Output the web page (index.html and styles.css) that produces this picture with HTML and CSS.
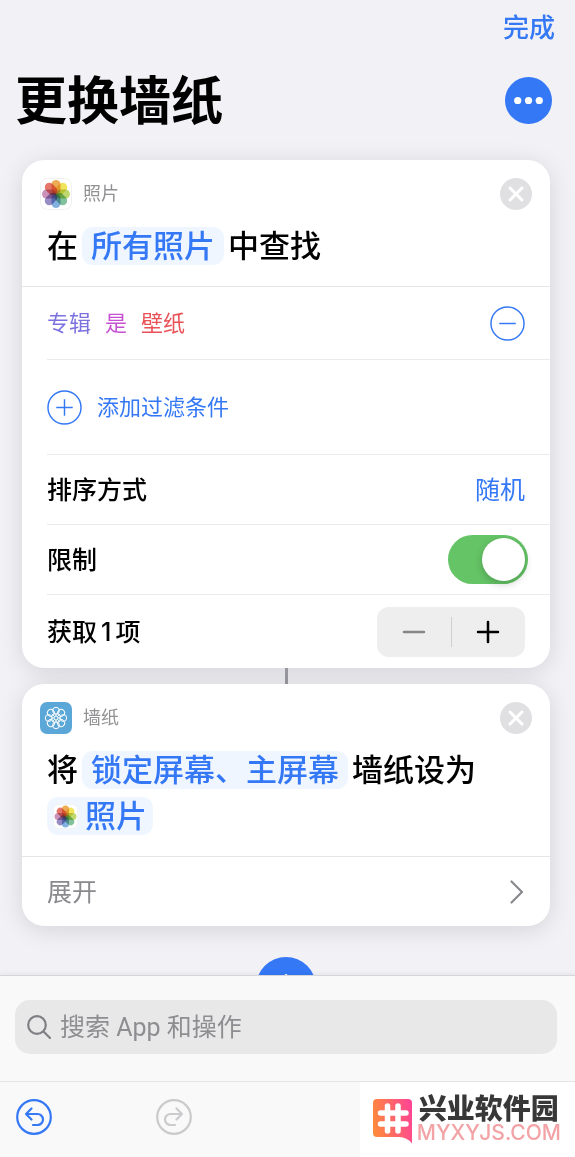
FILE: index.html
```html
<!DOCTYPE html>
<html lang="zh-CN">
<head>
    <meta charset="UTF-8">
    <meta name="viewport" content="width=device-width, initial-scale=1.0">
    <title>更换墙纸</title>
    <link rel="stylesheet" href="styles.css">
</head>
<body>
    <!-- Shared icons -->
    <svg class="sprite" aria-hidden="true">
        <symbol id="icon-photos" viewBox="0 0 32 32">
            <rect x="0.5" y="0.5" width="31" height="31" rx="7" fill="#fff" stroke="#f0f0f0"/>
            <g class="petals">
                <rect x="11.5" y="2" width="9" height="14" rx="4.5" fill="#eda243"/>
                <rect x="11.5" y="2" width="9" height="14" rx="4.5" fill="#f0e04a" transform="rotate(45 16 16)"/>
                <rect x="11.5" y="2" width="9" height="14" rx="4.5" fill="#b9d45f" transform="rotate(90 16 16)"/>
                <rect x="11.5" y="2" width="9" height="14" rx="4.5" fill="#74bb92" transform="rotate(135 16 16)"/>
                <rect x="11.5" y="2" width="9" height="14" rx="4.5" fill="#76a9dc" transform="rotate(180 16 16)"/>
                <rect x="11.5" y="2" width="9" height="14" rx="4.5" fill="#8d80bf" transform="rotate(225 16 16)"/>
                <rect x="11.5" y="2" width="9" height="14" rx="4.5" fill="#c586b2" transform="rotate(270 16 16)"/>
                <rect x="11.5" y="2" width="9" height="14" rx="4.5" fill="#e2695a" transform="rotate(315 16 16)"/>
            </g>
        </symbol>
        <symbol id="icon-close" viewBox="0 0 32 32">
            <circle cx="16" cy="16" r="16" fill="#e0e0e2"/>
            <path d="M10 10l12 12M22 10L10 22" stroke="#fff" stroke-width="3" stroke-linecap="round"/>
        </symbol>
    </svg>

    <main class="editor">
        <header class="top">
            <button class="done" type="button">完成</button>
            <div class="title-row">
                <h1>更换墙纸</h1>
                <button class="more" type="button" aria-label="更多">
                    <svg viewBox="0 0 48 48">
                        <circle cx="24" cy="24" r="24" fill="#3478f6"/>
                        <g fill="#fff">
                            <circle cx="13" cy="24" r="3.7"/>
                            <circle cx="24" cy="24" r="3.7"/>
                            <circle cx="35" cy="24" r="3.7"/>
                        </g>
                    </svg>
                </button>
            </div>
        </header>

        <section class="card">
            <div class="card-head">
                <div class="app">
                    <svg class="app-icon"><use href="#icon-photos"/></svg>
                    <span class="app-name">照片</span>
                    <button class="close" type="button" aria-label="移除"><svg><use href="#icon-close"/></svg></button>
                </div>
                <div class="action">
                    <span>在</span>
                    <button class="chip" type="button">所有照片</button>
                    <span>中查找</span>
                </div>
            </div>
            <div class="row row-filter">
                <div class="filter">
                    <a class="filter-field" href="#">专辑</a>
                    <a class="filter-operator" href="#">是</a>
                    <a class="filter-value" href="#">壁纸</a>
                </div>
                <button class="round" type="button" aria-label="移除过滤条件">
                    <svg viewBox="0 0 36 36"><circle cx="18" cy="18" r="17"/><path d="M9.500 18h17"/></svg>
                </button>
            </div>
            <div class="row row-add">
                <button class="add-filter" type="button">
                    <svg viewBox="0 0 36 36"><circle cx="18" cy="18" r="17"/><path d="M9.500 18h17M18 9.500v17"/></svg>
                    添加过滤条件
                </button>
            </div>
            <div class="row">
                <span>排序方式</span>
                <button class="value" type="button">随机</button>
            </div>
            <div class="row row-toggle">
                <label for="limit">限制</label>
                <input class="toggle" type="checkbox" id="limit" checked>
            </div>
            <div class="row row-count">
                <span>获取<span class="count">1</span>项</span>
                <div class="stepper">
                    <button type="button" aria-label="减少" disabled>
                        <svg viewBox="0 0 24 24"><path d="M2 12h20"/></svg>
                    </button>
                    <button type="button" aria-label="增加">
                        <svg viewBox="0 0 24 24"><path d="M2 12h20M12 2v20"/></svg>
                    </button>
                </div>
            </div>
        </section>

        <div class="connector"></div>

        <section class="card">
            <div class="card-head">
                <div class="app">
                    <svg class="app-icon" viewBox="0 0 32 32">
                        <rect width="32" height="32" rx="7" fill="#5ba8d8"/>
                        <g fill="none" stroke="#fff" stroke-width="1">
                            <circle cx="16" cy="8.700" r="3.400"/>
                            <circle cx="16" cy="8.700" r="3.400" transform="rotate(45 16 16)"/>
                            <circle cx="16" cy="8.700" r="3.400" transform="rotate(90 16 16)"/>
                            <circle cx="16" cy="8.700" r="3.400" transform="rotate(135 16 16)"/>
                            <circle cx="16" cy="8.700" r="3.400" transform="rotate(180 16 16)"/>
                            <circle cx="16" cy="8.700" r="3.400" transform="rotate(225 16 16)"/>
                            <circle cx="16" cy="8.700" r="3.400" transform="rotate(270 16 16)"/>
                            <circle cx="16" cy="8.700" r="3.400" transform="rotate(315 16 16)"/>
                            <circle cx="16" cy="16" r="2"/>
                            <path d="M16 14v-3M16 18v3M14 16h-3M18 16h3M14.600 14.600l-2.500-2.500M17.400 17.400l2.500 2.500M14.600 17.400l-2.500 2.500M17.400 14.600l2.500-2.500"/>
                        </g>
                    </svg>
                    <span class="app-name">墙纸</span>
                    <button class="close" type="button" aria-label="移除"><svg><use href="#icon-close"/></svg></button>
                </div>
                <div class="action">
                    <span>将</span>
                    <button class="chip" type="button">锁定屏幕、主屏幕</button>
                    <span>墙纸设为</span>
                    <button class="chip chip-photo" type="button">
                        <svg><use href="#icon-photos"/></svg>
                        照片
                    </button>
                </div>
            </div>
            <button class="expand" type="button">
                展开
                <svg viewBox="0 0 14 24"><path d="M1.500 1.500L12 12L1.500 22.500"/></svg>
            </button>
        </section>

        <button class="add-action" type="button" aria-label="添加操作">
            <svg viewBox="0 0 62 62">
                <circle cx="31" cy="31" r="31" fill="#3478f6"/>
                <path d="M31 19v24M19 31h24" stroke="#fff" stroke-width="3" stroke-linecap="round"/>
            </svg>
        </button>
    </main>

    <footer class="panel">
        <div class="search">
            <svg viewBox="0 0 24 24"><circle cx="10" cy="10" r="8.800"/><path d="M16.500 16.500l6.500 6.500"/></svg>
            <input type="search" placeholder="搜索 App 和操作" aria-label="搜索 App 和操作">
        </div>
        <div class="toolbar">
            <button class="history" type="button" aria-label="撤销">
                <svg viewBox="0 0 36 36">
                    <circle cx="18" cy="18" r="16.800"/>
                    <path d="M15.500 9.500L10 15l5.500 5.500M10 15h11.500a5.500 5.500 0 0 1 0 11H17"/>
                </svg>
            </button>
            <button class="history" type="button" aria-label="重做" disabled>
                <svg viewBox="0 0 36 36">
                    <circle cx="18" cy="18" r="16.800"/>
                    <path d="M20.500 9.500L26 15l-5.500 5.500M26 15H14.500a5.500 5.500 0 0 0 0 11H19"/>
                </svg>
            </button>
            <div class="brand">
                <svg viewBox="0 0 39 45">
                    <defs>
                        <linearGradient id="brand-fill" x1="0" y1="0.500" x2="1" y2="0.300">
                            <stop offset="0" stop-color="#ff8a3c"/>
                            <stop offset="1" stop-color="#ff4593"/>
                        </linearGradient>
                    </defs>
                    <path d="M4 0h31q4 0 4 4v40.500q-5-6.500-13-6.500H4q-4 0-4-4V4q0-4 4-4z" fill="url(#brand-fill)"/>
                    <path d="M14.500 7v25M25 7v25M7.500 14h25.500M7.500 25h25.500" stroke="#fff" stroke-width="5.500" stroke-linecap="round"/>
                </svg>
                <div class="brand-text">
                    <span class="brand-name">兴业软件园</span>
                    <span class="brand-site">MYXYJS.COM</span>
                </div>
            </div>
        </div>
    </footer>
</body>
</html>
```

FILE: styles.css
```css
* {
    margin: 0;
    padding: 0;
    box-sizing: border-box;
}

body {
    display: flex;
    flex-direction: column;
    height: 100vh;
    background: #f2f1f6;
    color: #000;
    font-family: Inter, "Noto Sans CJK SC", sans-serif;
    font-size: 25px;
    line-height: 32px;
}

button,
input {
    border: 0;
    background: none;
    color: inherit;
    font: inherit;
}

a {
    text-decoration: none;
}

svg {
    display: block;
    flex: none;
    fill: none;
}

.sprite {
    position: absolute;
    width: 0;
    height: 0;
}

.petals {
    isolation: isolate;
    opacity: 0.9;
}

.petals rect {
    mix-blend-mode: multiply;
}

.editor {
    flex: 1;
    min-height: 0;
    overflow: hidden;
    padding: 8px 25px 0 22px;
}

/* Title */
.top {
    display: flex;
    flex-direction: column;
    margin: 0 -2px 26px -7px;
}

.done {
    align-self: flex-end;
    margin-right: -3px;
    color: #3478f6;
    font-size: 26px;
    font-weight: 500;
    line-height: 40px;
}

.title-row {
    display: flex;
    align-items: center;
    justify-content: space-between;
    margin-top: 19px;
}

h1 {
    padding-top: 3px;
    font-size: 52px;
    font-weight: 700;
    line-height: 64px;
}

.more svg {
    width: 47px;
    height: 47px;
}

/* Action cards */
.card {
    border-radius: 22px;
    background: #fff;
    box-shadow: 0 4px 24px rgba(0, 0, 20, 0.12);
}

.card-head {
    padding: 18px 18px 21px;
    border-bottom: 1px solid #e6e6e8;
}

.app {
    display: flex;
    align-items: center;
    margin-bottom: 17px;
}

.app-icon {
    width: 32px;
    height: 32px;
}

.app-name {
    margin-left: 11px;
    color: #929294;
    font-size: 18px;
}

.close {
    margin-left: auto;
}

.close svg {
    width: 32px;
    height: 32px;
}

.action {
    display: flex;
    flex-wrap: wrap;
    gap: 8px 4px;
    padding-left: 7px;
    font-size: 31px;
    font-weight: 500;
    line-height: 38px;
}

.chip {
    padding: 0 9px;
    border-radius: 11px;
    background: #eff6ff;
    color: #3478f6;
}

.chip-photo {
    display: flex;
    align-items: center;
    gap: 7px;
    padding: 0 6px;
}

.chip-photo svg {
    width: 25px;
    height: 25px;
}

.row {
    display: flex;
    align-items: center;
    justify-content: space-between;
    min-height: 70px;
    margin-left: 25px;
    padding-right: 25px;
    border-bottom: 1px solid #ebebed;
    font-weight: 500;
}

.row-filter {
    min-height: 73px;
}

.row-add {
    min-height: 95px;
}

.row-toggle {
    padding-right: 22px;
}

.row-count {
    min-height: 73px;
    border-bottom: 0;
}

.filter {
    display: flex;
    gap: 14px;
    font-size: 22px;
    font-weight: 400;
}

.filter-field {
    color: #7b72e0;
}

.filter-operator {
    color: #c651d0;
}

.filter-value {
    color: #ea5257;
}

.round svg,
.add-filter svg {
    width: 35px;
    height: 35px;
    stroke: #3478f6;
    stroke-width: 1.5;
}

.add-filter {
    display: flex;
    align-items: center;
    gap: 15px;
    color: #3478f6;
    font-size: 22px;
    font-weight: 400;
}

.value {
    color: #3478f6;
    font-weight: 400;
}

.toggle {
    display: flex;
    width: 80px;
    height: 49px;
    padding: 3px;
    border-radius: 25px;
    background: #e9e9eb;
    appearance: none;
}

.toggle::before {
    content: "";
    width: 43px;
    height: 43px;
    border-radius: 50%;
    background: #fff;
    box-shadow: 0 3px 8px rgba(0, 0, 0, 0.2);
}

.toggle:checked {
    justify-content: flex-end;
    background: #65c466;
}

.count {
    margin: 0 4px;
}

.stepper {
    display: flex;
    align-items: center;
    width: 148px;
    height: 50px;
    border-radius: 12px;
    background: #eee;
}

.stepper button {
    display: flex;
    flex: 1;
    justify-content: center;
    padding: 3px 0;
    stroke: #000;
    stroke-width: 2.5;
    stroke-linecap: round;
}

.stepper button:disabled {
    border-right: 1px solid #d0d0d2;
    stroke: #858585;
}

.stepper svg {
    width: 24px;
    height: 24px;
}

.connector {
    width: 3px;
    height: 16px;
    margin: 0 auto;
    background: #97979f;
}

.expand {
    display: flex;
    align-items: center;
    justify-content: space-between;
    width: 100%;
    height: 69px;
    padding: 0 26px 0 25px;
    color: #8a8a8e;
}

.expand svg {
    width: 14px;
    height: 24px;
    stroke: #8a8a8e;
    stroke-width: 2.2;
    stroke-linecap: round;
    stroke-linejoin: round;
}

.add-action {
    display: block;
    margin: 31px auto 0;
}

.add-action svg {
    width: 60px;
    height: 60px;
}

/* Bottom panel */
.panel {
    position: relative;
    border-top: 1px solid #d6d6da;
    background: #f9f9f9;
    box-shadow: 0 0 6px rgba(0, 0, 0, 0.08);
}

.search {
    display: flex;
    align-items: center;
    gap: 9px;
    height: 54px;
    margin: 24px 18px 27px 15px;
    padding: 0 12px;
    border-radius: 15px;
    background: #e8e8e8;
}

.search svg {
    width: 24px;
    height: 24px;
    stroke: #808084;
    stroke-width: 2.2;
    stroke-linecap: round;
}

.search input {
    flex: 1;
    min-width: 0;
    height: 40px;
    outline: 0;
    font-family: Roboto, "Noto Sans CJK SC", sans-serif;
}

.search input::placeholder {
    color: #8e8e92;
}

.toolbar {
    display: flex;
    align-items: center;
    gap: 104px;
    height: 76px;
    padding-left: 16px;
    border-top: 1px solid #e4e4e6;
}

.history {
    margin-bottom: 5px;
}

.history svg {
    width: 36px;
    height: 36px;
    stroke: #3478f6;
    stroke-width: 2.2;
    stroke-linecap: round;
    stroke-linejoin: round;
}

.history:disabled svg {
    stroke: #cbcbcd;
}

.brand {
    display: flex;
    align-items: center;
    align-self: stretch;
    gap: 5px;
    margin-left: auto;
    padding: 3px 14px 0 13px;
    background: #fff;
}

.brand svg {
    width: 39px;
    height: 45px;
}

.brand-text {
    display: flex;
    flex-direction: column;
}

.brand-name {
    padding-left: 2px;
    color: #383838;
    font-size: 28px;
    font-weight: 900;
    line-height: 24px;
}

.brand-site {
    color: #f3a3a5;
    font-size: 21px;
    font-weight: 500;
    line-height: 24px;
}
```
